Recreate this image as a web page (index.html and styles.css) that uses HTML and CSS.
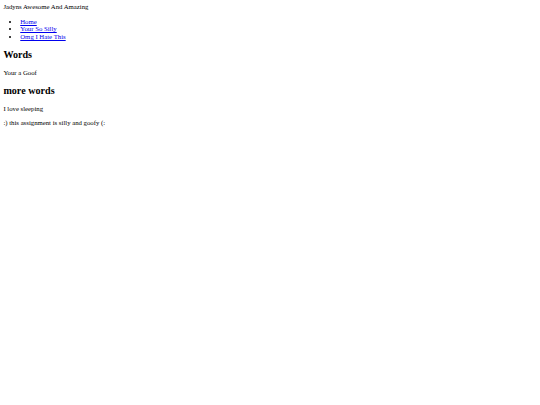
FILE: index.html
```html
<!DOCTYPE html>
<html>
<head>
<meta charset="utf-8">
<link rel="stylesheet" href="styles.css">
</head>
<body class="page">
<div class="title">Jadyns Awesome And Amazing</div>
<ul class="nav">
<li><a class="link" href="#">Home</a></li>
<li><a class="link" href="#">Your So Silly</a></li>
<li><a class="link" href="#">Omg I Hate This</a></li>
</ul>
<h2 class="heading">Words</h2>
<p class="text">Your a Goof</p>
<h2 class="heading">more words</h2>
<p class="text">I love sleeping</p>
<p class="text">:) this assignment is silly and goofy (:</p>
</body>
</html>
```
FILE: styles.css
```css
.page {
  margin: 3.375px;
  font-family: "Liberation Serif", "Times New Roman", serif;
  font-size: 6.75px;
  line-height: 1.135;
  color: #000;
  background: #fff;
}
.nav {
  margin: 1em 0;
  padding-left: 16.875px;
  list-style: disc;
}
.link {
  color: #0000ee;
  text-decoration: underline;
}
.heading {
  font-size: 1.5em;
  font-weight: bold;
  margin: 0.83em 0;
}
.text {
  margin: 1em 0;
}
```
